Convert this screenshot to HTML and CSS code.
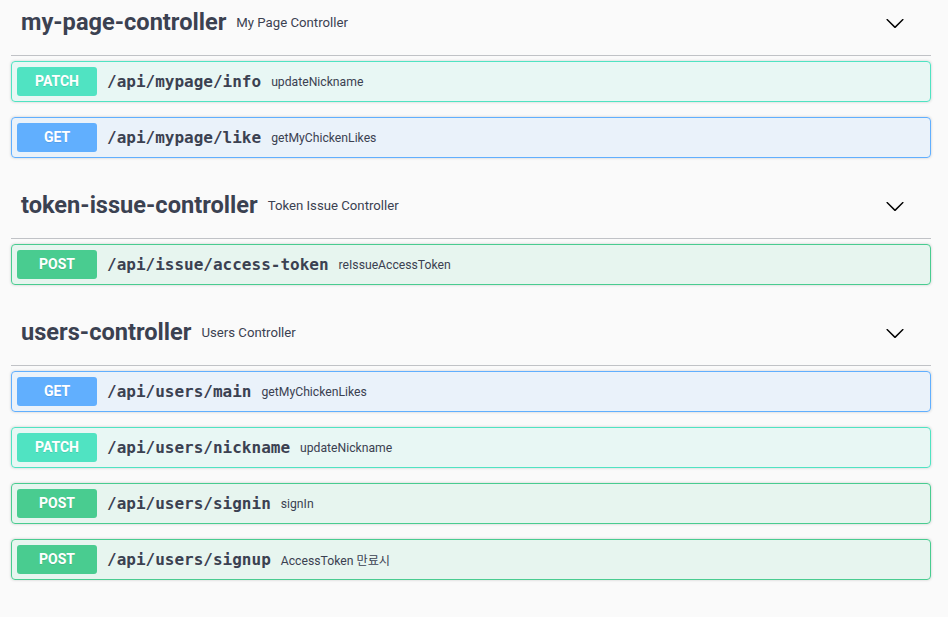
FILE: index.html
```html
<!DOCTYPE html>
<html lang="ko">
<head>
<meta charset="utf-8">
<title>Swagger UI</title>
<link rel="stylesheet" href="styles.css">
</head>
<body>
<div class="page">

  <section class="tag-section">
    <h3 class="tag">
      <span class="tag-name">my-page-controller</span>
      <small class="tag-desc">My Page Controller</small>
      <button class="expand"><svg width="20" height="20" viewBox="0 0 20 20"><path d="M17.418 6.109c.272-.268.709-.268.979 0s.271.701 0 .969l-7.908 7.83c-.27.268-.707.268-.979 0l-7.908-7.83c-.27-.268-.27-.701 0-.969.271-.268.709-.268.979 0L10 13.25l7.418-7.141z"/></svg></button>
    </h3>
    <div class="op op-patch">
      <span class="method">PATCH</span>
      <span class="path">/api/mypage/info</span>
      <span class="summary">updateNickname</span>
    </div>
    <div class="op op-get">
      <span class="method">GET</span>
      <span class="path">/api/mypage/like</span>
      <span class="summary">getMyChickenLikes</span>
    </div>
  </section>

  <section class="tag-section">
    <h3 class="tag">
      <span class="tag-name">token-issue-controller</span>
      <small class="tag-desc">Token Issue Controller</small>
      <button class="expand"><svg width="20" height="20" viewBox="0 0 20 20"><path d="M17.418 6.109c.272-.268.709-.268.979 0s.271.701 0 .969l-7.908 7.83c-.27.268-.707.268-.979 0l-7.908-7.83c-.27-.268-.27-.701 0-.969.271-.268.709-.268.979 0L10 13.25l7.418-7.141z"/></svg></button>
    </h3>
    <div class="op op-post">
      <span class="method">POST</span>
      <span class="path">/api/issue/access&#8209;token</span>
      <span class="summary">reIssueAccessToken</span>
    </div>
  </section>

  <section class="tag-section">
    <h3 class="tag">
      <span class="tag-name">users-controller</span>
      <small class="tag-desc">Users Controller</small>
      <button class="expand"><svg width="20" height="20" viewBox="0 0 20 20"><path d="M17.418 6.109c.272-.268.709-.268.979 0s.271.701 0 .969l-7.908 7.83c-.27.268-.707.268-.979 0l-7.908-7.83c-.27-.268-.27-.701 0-.969.271-.268.709-.268.979 0L10 13.25l7.418-7.141z"/></svg></button>
    </h3>
    <div class="op op-get">
      <span class="method">GET</span>
      <span class="path">/api/users/main</span>
      <span class="summary">getMyChickenLikes</span>
    </div>
    <div class="op op-patch">
      <span class="method">PATCH</span>
      <span class="path">/api/users/nickname</span>
      <span class="summary">updateNickname</span>
    </div>
    <div class="op op-post">
      <span class="method">POST</span>
      <span class="path">/api/users/signin</span>
      <span class="summary">signIn</span>
    </div>
    <div class="op op-post">
      <span class="method">POST</span>
      <span class="path">/api/users/signup</span>
      <span class="summary">AccessToken 만료시</span>
    </div>
  </section>

</div>
</body>
</html>
```

FILE: styles.css
```css
* { box-sizing: border-box; }

html, body {
  margin: 0;
  padding: 0;
  background: #fafafa;
  height: 100%;
  overflow: hidden;
}

body {
  font-family: Roboto, "Noto Sans CJK KR", sans-serif;
  color: #3b4151;
}

.page {
  width: 920px;
  margin: -10px 0 0 11px;
}

.tag-section {
  display: flex;
  flex-direction: column;
}

.tag {
  display: flex;
  align-items: center;
  height: 66px;
  margin: 0 0 5px;
  padding: 0 20px 0 10px;
  border-bottom: 1px solid rgba(59, 65, 81, 0.3);
  font-size: 23.6px;
  font-weight: 700;
  color: #3b4151;
}

.tag-name {
  line-height: 1;
}

.tag-desc {
  flex: 1;
  padding: 0 10px;
  font-size: 13.2px;
  font-weight: 400;
}

.expand {
  display: flex;
  border: none;
  background: none;
  padding: 0;
  margin-right: 6px;
  cursor: pointer;
}

.expand svg {
  fill: #000;
  display: block;
}

.op {
  display: flex;
  align-items: center;
  margin: 0 0 15px;
  padding: 5px;
  border: 1px solid;
  border-radius: 4px;
  box-shadow: 0 0 3px rgba(0, 0, 0, 0.19);
}

.method {
  min-width: 80px;
  padding: 6px 0;
  border-radius: 3px;
  text-align: center;
  font-size: 14px;
  line-height: 17px;
  font-weight: 700;
  color: #fff;
  text-shadow: 0 1px 0 rgba(0, 0, 0, 0.1);
}

.path {
  padding: 0 10px;
  font-family: "DejaVu Sans Mono", monospace;
  font-size: 16px;
  font-weight: 700;
  color: #3b4151;
}

.summary {
  font-size: 12.2px;
  color: #3b4151;
}

.op-patch { background: rgba(80, 227, 194, 0.1); border-color: #50e3c2; }
.op-patch .method { background: #50e3c2; }

.op-get { background: rgba(97, 175, 254, 0.1); border-color: #61affe; }
.op-get .method { background: #61affe; }

.op-post { background: rgba(73, 204, 144, 0.1); border-color: #49cc90; }
.op-post .method { background: #49cc90; }
```
